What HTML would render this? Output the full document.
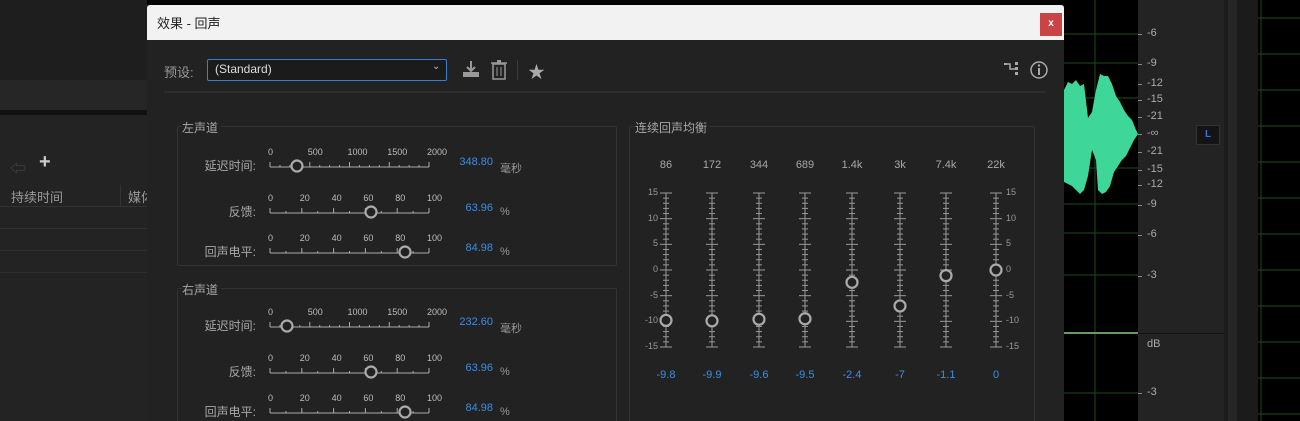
<!DOCTYPE html>
<html><head><meta charset="utf-8"><style>
html,body{margin:0;width:1300px;height:421px;overflow:hidden}
body{background:#1d1d1d;font-family:"Liberation Sans","Noto Sans CJK SC",sans-serif;position:relative}
div,span,svg{position:absolute}
.t{font-size:12px;color:#a8a8a8;white-space:nowrap}
.s{font-size:9px;color:#bdbdbd;white-space:nowrap}
.b{font-size:11px;color:#3a8ee6;white-space:nowrap}
.box{border:1px solid #333;border-radius:2px}
</style></head><body>
<div style="left:0;top:0;width:147px;height:80px;background:#1e1e1e"></div>
<div style="left:0;top:80px;width:147px;height:30px;background:#262626"></div>
<div style="left:0;top:110px;width:147px;height:5px;background:#111"></div>
<div style="left:0;top:115px;width:147px;height:306px;background:#232323"></div>
<span style="left:10px;top:155px;color:#444;font-size:16px">⇦</span>
<span style="left:39px;top:151px;color:#ccc;font-size:20px;font-weight:bold">+</span>
<span class="t" style="left:11px;top:187px;color:#9a9a9a;font-size:13px">持续时间</span>
<span class="t" style="left:128px;top:187px;color:#9a9a9a;font-size:13px">媒体</span>
<div style="left:0;top:206px;width:147px;height:1px;background:#333"></div>
<div style="left:0;top:228px;width:147px;height:1px;background:#2f2f2f"></div>
<div style="left:0;top:250px;width:147px;height:1px;background:#2f2f2f"></div>
<div style="left:0;top:272px;width:147px;height:1px;background:#2f2f2f"></div>
<div style="left:120px;top:185px;width:1px;height:21px;background:#333"></div>
<div style="left:147px;top:0;width:920px;height:6px;background:#050505"></div>
<div style="left:1064px;top:0;width:74px;height:421px;background:#000"></div>
<svg style="left:1064px;top:0" width="74" height="421">
<g stroke="#1c4a1c" stroke-width="1">
<line x1="31" y1="0" x2="31" y2="421"/>
<line x1="0" y1="34" x2="74" y2="34"/><line x1="0" y1="63" x2="74" y2="63"/><line x1="0" y1="98" x2="74" y2="98"/><line x1="0" y1="168" x2="74" y2="168"/><line x1="0" y1="204" x2="74" y2="204"/><line x1="0" y1="233" x2="74" y2="233"/><line x1="0" y1="275" x2="74" y2="275"/><line x1="0" y1="393" x2="74" y2="393"/>
</g>
<line x1="0" y1="333" x2="74" y2="333" stroke="#6a9a6a" stroke-width="2"/>
<path fill="#3fd69a" d="M0 90 L4 82 L8 84 L12 80 L16 86 L20 84 L24 118 L28 112 L32 90 L36 74 L40 76 L44 76 L48 84 L52 96 L56 102 L60 110 L64 116 L68 120 L72 130 L74 134 L70 140 L66 148 L62 156 L58 160 L54 166 L50 172 L46 186 L42 192 L38 194 L34 190 L32 160 L28 150 L24 176 L20 190 L16 194 L12 190 L8 186 L4 184 L0 182Z"/>
</svg>
<div style="left:1138px;top:0;width:86px;height:421px;background:#232323"></div>
<div style="left:1138px;top:333px;width:86px;height:1px;background:#111"></div>
<div style="left:1224px;top:0;width:34px;height:421px;background:#1b1b1b"></div>
<div style="left:1228px;top:0;width:9px;height:421px;background:#262626"></div>
<div style="left:1258px;top:0;width:42px;height:421px;background:#000"></div>
<svg style="left:1258px;top:0" width="42" height="421"><g stroke="#1c4a1c"><line x1="3" y1="0" x2="3" y2="421"/>
<line x1="0" y1="18" x2="42" y2="18"/><line x1="0" y1="54" x2="42" y2="54"/><line x1="0" y1="90" x2="42" y2="90"/><line x1="0" y1="126" x2="42" y2="126"/><line x1="0" y1="162" x2="42" y2="162"/><line x1="0" y1="198" x2="42" y2="198"/><line x1="0" y1="234" x2="42" y2="234"/><line x1="0" y1="270" x2="42" y2="270"/><line x1="0" y1="306" x2="42" y2="306"/><line x1="0" y1="342" x2="42" y2="342"/><line x1="0" y1="378" x2="42" y2="378"/><line x1="0" y1="414" x2="42" y2="414"/></g></svg>
<div style="left:1196px;top:125px;width:22px;height:18px;background:#141414;border:1px solid #333;border-radius:2px;color:#3a6ee6;font-size:10px;text-align:center;line-height:18px;font-weight:bold">L</div>
<div style="left:147px;top:5px;width:917px;height:416px;background:#222"></div>
<div style="left:147px;top:5px;width:917px;height:35px;background:#f2f2f2;border-radius:3px 3px 0 0"></div>
<span style="left:157px;top:13px;font-size:13px;color:#222">效果 - 回声</span>
<div style="left:1040px;top:13px;width:22px;height:23px;background:#c94444;color:#fff;font-size:10px;font-weight:bold;text-align:center;line-height:22px">x</div>
<span class="t" style="left:164px;top:62px;color:#999;font-size:13px">预设:</span>
<div style="left:207px;top:59px;width:238px;height:20px;border:1px solid #3a7fd0;background:#1b1b1b;border-radius:2px"></div>
<span style="left:215px;top:62px;font-size:12px;color:#ddd">(Standard)</span>
<span style="left:432px;top:61px;font-size:10px;color:#bbb">⌄</span>
<svg style="left:461px;top:59px" width="20" height="20"><path d="M10 2v10M6 8l4 4 4-4" stroke="#999" stroke-width="2" fill="none"/><rect x="2" y="13" width="16" height="5" fill="#999"/></svg>
<svg style="left:490px;top:59px" width="18" height="22"><rect x="3" y="5" width="12" height="15" fill="none" stroke="#999" stroke-width="1.5"/><line x1="1" y1="4" x2="17" y2="4" stroke="#999" stroke-width="1.5"/><rect x="7" y="1" width="4" height="3" fill="#999"/><g stroke="#999"><line x1="7" y1="8" x2="7" y2="17"/><line x1="11" y1="8" x2="11" y2="17"/></g></svg>
<div style="left:517px;top:60px;width:1px;height:20px;background:#3a3a3a"></div>
<span style="left:528px;top:58px;font-size:17px;color:#aaa">★</span>
<svg style="left:1003px;top:61px" width="16" height="16"><g fill="#aaa"><rect x="1" y="2" width="3" height="2"/><rect x="12" y="1" width="3" height="3"/><rect x="12" y="6" width="3" height="3"/><rect x="12" y="11" width="3" height="3"/></g><path d="M3 3h4v5h5" stroke="#aaa" fill="none" stroke-width="1.5"/></svg>
<svg style="left:1029px;top:60px" width="20" height="20"><circle cx="10" cy="10" r="8" fill="none" stroke="#aaa" stroke-width="1.5"/><rect x="9" y="8" width="2" height="7" fill="#aaa"/><circle cx="10" cy="5.5" r="1.2" fill="#aaa"/></svg>
<div style="left:164px;top:91px;width:882px;height:2px;background:#2d2d2d"></div>
<div class="box" style="left:177px;top:126px;width:438px;height:138px"></div>
<div class="box" style="left:177px;top:288px;width:438px;height:140px;border-bottom:none"></div>
<div class="box" style="left:629px;top:126px;width:404px;height:300px;border-bottom:none"></div>
<span class="t" style="left:182px;top:119px;background:#222;padding-right:3px">左声道</span>
<span class="t" style="left:182px;top:281px;background:#222;padding-right:3px">右声道</span>
<span class="t" style="left:635px;top:119px;background:#222;padding-right:3px">连续回声均衡</span>
<div id="gen" style="left:0;top:0;width:1300px;height:421px;overflow:hidden"></div>
<script>
var g=document.getElementById('gen'),h='';
function sl(y,lab,labs,kx,val,unit,minor){
 h+='<span class="t" style="right:'+(1300-256)+'px;top:'+(y-9)+'px;text-align:right">'+lab+':</span>';
 var x0=270,x1=429,n=labs.length-1;
 labs.forEach(function(l,i){var x=x0+(x1-x0)*i/n;h+='<span class="s" style="left:'+(x-2)+'px;top:'+(y-19)+'px">'+l+'</span>';});
 var s='<svg style="left:268px;top:'+(y-8)+'px" width="164" height="16"><line x1="2" y1="9" x2="161" y2="9" stroke="#aaa"/>';
 var total=n*minor;for(var i=0;i<=total;i++){var x=2+159*i/total;var hh=(i%minor==0)?5:2;s+='<line x1="'+x+'" y1="'+(9-hh)+'" x2="'+x+'" y2="9" stroke="#aaa"/>';}
 s+='<circle cx="'+(kx-268)+'" cy="8" r="5.5" fill="#222" stroke="#aaa" stroke-width="2.2"/></svg>';h+=s;
 h+='<span class="b" style="right:'+(1300-493)+'px;top:'+(y-10)+'px">'+val+'</span>';
 h+='<span class="t" style="left:500px;top:'+(y-6)+'px;font-size:11px;color:#999">'+unit+'</span>';
}
[[0,[348.80,63.96,84.98],[297,371,405]],[160,[232.60,63.96,84.98],[287,371,405]]].forEach(function(c){var o=c[0];
sl(166+o,'延迟时间',['0','500','1000','1500','2000'],c[2][0],c[1][0].toFixed(2),'毫秒',4);
sl(212+o,'反馈',['0','20','40','60','80','100'],c[2][1],c[1][1].toFixed(2),'%',2);
sl(252+o,'回声电平',['0','20','40','60','80','100'],c[2][2],c[1][2].toFixed(2),'%',2);});
var xs=[666,712,759,805,852,900,946,996],fr=['86','172','344','689','1.4k','3k','7.4k','22k'],vs=[-9.8,-9.9,-9.6,-9.5,-2.4,-7,-1.1,0];
var s='<svg style="left:630px;top:180px" width="400" height="180">';
xs.forEach(function(x,k){x-=630;s+='<line x1="'+x+'" y1="13" x2="'+x+'" y2="167" stroke="#999"/>';
 for(var i=0;i<=30;i++){var y=13+154*i/30;var w=(i%5==0)?6:3;s+='<line x1="'+(x-w)+'" y1="'+y+'" x2="'+(x+w)+'" y2="'+y+'" stroke="#999"/>';}
 var ky=13+(15-vs[k])*154/30;s+='<circle cx="'+x+'" cy="'+ky+'" r="5.5" fill="#222" stroke="#aaa" stroke-width="2.2"/>';});
s+='</svg>';h+=s;
xs.forEach(function(x,k){h+='<span class="t" style="left:'+(x-20)+'px;width:40px;text-align:center;top:159px;font-size:11px">'+fr[k]+'</span>';
 h+='<span class="b" style="left:'+(x-20)+'px;width:40px;text-align:center;top:369px">'+vs[k]+'</span>';});
[15,10,5,0,-5,-10,-15].forEach(function(v){var y=193+(15-v)*154/30;
 h+='<span class="s" style="right:'+(1300-658)+'px;top:'+(y-6)+'px;color:#999">'+v+'</span>';
 h+='<span class="s" style="left:1006px;top:'+(y-6)+'px;color:#999">'+v+'</span>';});
[['-6',34],['-9',64],['-12',84],['-15',100],['-21',117],['-∞',134],['-21',152],['-15',170],['-12',185],['-9',205],['-6',235],['-3',276],['-3',393]].forEach(function(r){
 h+='<span class="t" style="left:1147px;top:'+(r[1]-7)+'px;font-size:11px;color:#aaa">'+r[0]+'</span>';
 h+='<div style="left:1138px;top:'+r[1]+'px;width:4px;height:1px;background:#888"></div>';});
h+='<span class="t" style="left:1147px;top:338px;font-size:11px;color:#aaa">dB</span>';
g.innerHTML=h;
</script>
</body></html>
